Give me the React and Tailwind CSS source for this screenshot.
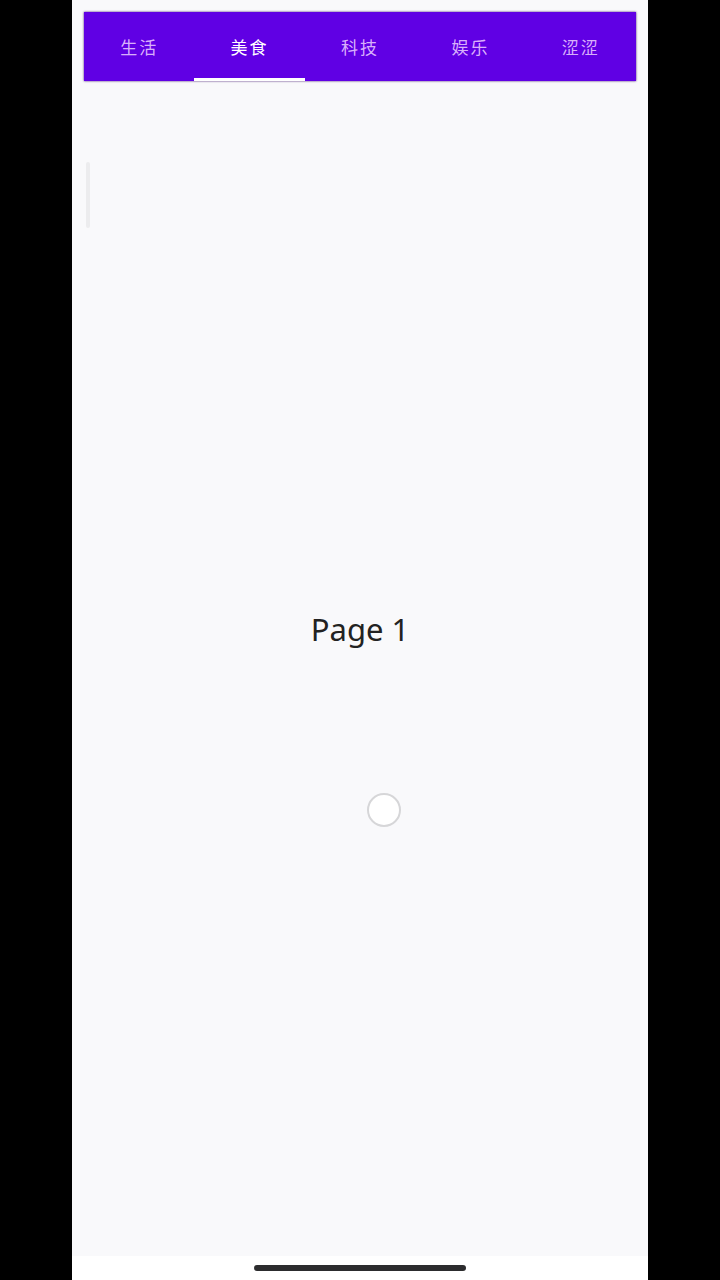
export default function App() {
  const tabs = ["生活", "美食", "科技", "娱乐", "涩涩"];
  const active = 1;

  return (
    <div className="flex h-[1280px] w-[720px] bg-black">
      <div className="w-[72px] shrink-0 bg-black" />

      {/* PHONE */}
      <div className="flex w-[576px] flex-col bg-[#f9f9fb] font-['Noto_Sans','Noto_Sans_CJK_SC',sans-serif]">
        {/* TABS */}
        <div className="px-3 pt-3">
          <div className="flex h-[69px] bg-[#6000e4] shadow-[0_0_2px_rgba(50,0,100,0.9)]">
            {tabs.map((t, i) => (
              <div key={t} className="relative flex flex-1 items-center justify-center pt-[2px]">
                <span
                  className={
                    i === active
                      ? "text-[17px] tracking-[2px] text-white"
                      : "text-[17px] tracking-[2px] text-[#e9c8ff]/90"
                  }
                >
                  {t}
                </span>
                {i === active && <div className="absolute inset-x-0 bottom-0 h-[3px] bg-white" />}
              </div>
            ))}
          </div>
        </div>

        {/* CONTENT */}
        <div className="flex flex-1 flex-col px-3">
          <div className="ml-[2px] mt-[81px] h-[66px] w-[4px] rounded-full bg-[#ececee]" />
          <div className="mt-[381px] text-center text-[31px] leading-[40px] text-[#222]">Page 1</div>
          <div className="ml-[283px] mt-[144px] h-[34px] w-[34px] rounded-full border-2 border-[#d6d6d8] bg-white" />
        </div>

        {/* HOME BAR */}
        <div className="flex h-[24px] items-center justify-center bg-white">
          <div className="h-[6px] w-[212px] rounded-full bg-[#2c2c2e]" />
        </div>
      </div>

      <div className="w-[72px] shrink-0 bg-black" />
    </div>
  );
}
